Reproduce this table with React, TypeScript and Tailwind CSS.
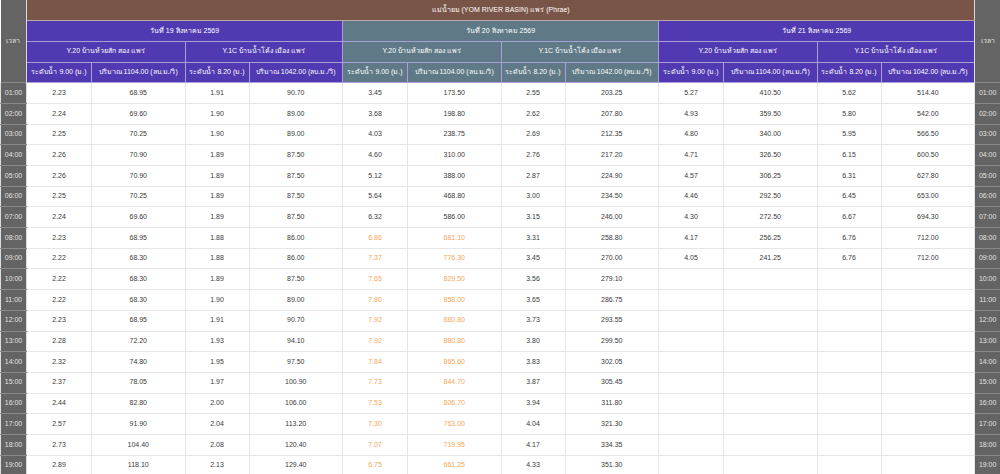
type Station = { level: string[]; flow: string[]; warnFrom?: number };

const hours = Array.from({ length: 19 }, (_, i) => `${String(i + 1).padStart(2, '0')}:00`);

const days: { title: string; tone: 'purple' | 'slate'; stations: Station[] }[] = [
  {
    title: 'วันที่ 19 สิงหาคม 2569',
    tone: 'purple',
    stations: [
      {
        level: ['2.23', '2.24', '2.25', '2.26', '2.26', '2.25', '2.24', '2.23', '2.22', '2.22', '2.22', '2.23', '2.28', '2.32', '2.37', '2.44', '2.57', '2.73', '2.89'],
        flow: ['68.95', '69.60', '70.25', '70.90', '70.90', '70.25', '69.60', '68.95', '68.30', '68.30', '68.30', '68.95', '72.20', '74.80', '78.05', '82.80', '91.90', '104.40', '118.10'],
      },
      {
        level: ['1.91', '1.90', '1.90', '1.89', '1.89', '1.89', '1.89', '1.88', '1.88', '1.89', '1.90', '1.91', '1.93', '1.95', '1.97', '2.00', '2.04', '2.08', '2.13'],
        flow: ['90.70', '89.00', '89.00', '87.50', '87.50', '87.50', '87.50', '86.00', '86.00', '87.50', '89.00', '90.70', '94.10', '97.50', '100.90', '106.00', '113.20', '120.40', '129.40'],
      },
    ],
  },
  {
    title: 'วันที่ 20 สิงหาคม 2569',
    tone: 'slate',
    stations: [
      {
        level: ['3.45', '3.68', '4.03', '4.60', '5.12', '5.64', '6.32', '6.86', '7.37', '7.65', '7.80', '7.92', '7.92', '7.84', '7.73', '7.53', '7.30', '7.07', '6.75'],
        flow: ['173.50', '198.80', '238.75', '310.00', '388.00', '468.80', '586.00', '681.10', '776.30', '829.50', '858.00', '880.80', '880.80', '865.60', '844.70', '806.70', '763.00', '719.95', '661.25'],
        warnFrom: 7,
      },
      {
        level: ['2.55', '2.62', '2.69', '2.76', '2.87', '3.00', '3.15', '3.31', '3.45', '3.56', '3.65', '3.73', '3.80', '3.83', '3.87', '3.94', '4.04', '4.17', '4.33'],
        flow: ['203.25', '207.80', '212.35', '217.20', '224.90', '234.50', '246.00', '258.80', '270.00', '279.10', '286.75', '293.55', '299.50', '302.05', '305.45', '311.80', '321.30', '334.35', '351.30'],
      },
    ],
  },
  {
    title: 'วันที่ 21 สิงหาคม 2569',
    tone: 'purple',
    stations: [
      {
        level: ['5.27', '4.93', '4.80', '4.71', '4.57', '4.46', '4.30', '4.17', '4.05'],
        flow: ['410.50', '359.50', '340.00', '326.50', '306.25', '292.50', '272.50', '256.25', '241.25'],
      },
      {
        level: ['5.62', '5.80', '5.95', '6.15', '6.31', '6.45', '6.67', '6.76', '6.76'],
        flow: ['514.40', '542.00', '566.50', '600.50', '627.80', '653.00', '694.30', '712.00', '712.00'],
      },
    ],
  },
];

const stationNames = ['Y.20 บ้านห้วยสัก สอง แพร่', 'Y.1C บ้านน้ำโค้ง เมือง แพร่'];
const colNames = [
  ['ระดับน้ำ 9.00 (ม.)', 'ปริมาณ 1104.00 (ลบ.ม./วิ)'],
  ['ระดับน้ำ 8.20 (ม.)', 'ปริมาณ 1042.00 (ลบ.ม./วิ)'],
];

const toneBg = (tone: 'purple' | 'slate') => (tone === 'purple' ? 'bg-[#5039b1]' : 'bg-[#5f7a86]');

const hdr = 'border border-[#a99fd8] text-white font-normal h-[20.7px] p-0 text-center';
const timeCell = 'bg-[#646464] text-[#e2e2e2] border-x border-[#dcdcdc] border-y border-y-[#8a8a8a] h-[20.7px] p-0 text-center';

export default function App() {
  return (
    <div className="w-[1000px] h-[474px] overflow-hidden bg-white font-['Liberation_Sans','Noto_Sans',sans-serif] text-[7px]">
      <table className="w-[1000px] table-fixed border-collapse">
        <colgroup>
          <col className="w-[26px]" />
          {days.map((d) => [65, 93.5, 64, 93.5].map((w, i) => <col key={d.title + i} style={{ width: w }} />))}
          <col className="w-[26px]" />
        </colgroup>
        <thead>
          <tr>
            <th rowSpan={4} className="bg-[#646464] text-[#e2e2e2] font-normal border-r border-[#dcdcdc] p-0">
              เวลา
            </th>
            <th colSpan={12} className="bg-[#795548] text-white font-normal h-[20.7px] p-0 border-b border-[#b9a9a2]">
              แม่น้ำยม (YOM RIVER BASIN) แพร่ (Phrae)
            </th>
            <th rowSpan={4} className="bg-[#646464] text-[#e2e2e2] font-normal border-l border-[#dcdcdc] p-0">
              เวลา
            </th>
          </tr>
          <tr>
            {days.map((d) => (
              <th key={d.title} colSpan={4} className={`${hdr} ${toneBg(d.tone)}`}>
                {d.title}
              </th>
            ))}
          </tr>
          <tr>
            {days.map((d) =>
              stationNames.map((s) => (
                <th key={d.title + s} colSpan={2} className={`${hdr} ${toneBg(d.tone)}`}>
                  {s}
                </th>
              )),
            )}
          </tr>
          <tr>
            {days.map((d) =>
              colNames.flat().map((c, i) => (
                <th key={d.title + i} className={`${hdr} ${toneBg(d.tone)} whitespace-nowrap`}>
                  {c}
                </th>
              )),
            )}
          </tr>
        </thead>
        <tbody>
          {hours.map((h, r) => (
            <tr key={h}>
              <td className={timeCell}>{h}</td>
              {days.map((d) =>
                d.stations.map((s, si) => {
                  const warn = s.warnFrom !== undefined && r >= s.warnFrom;
                  const color = warn ? 'text-[#f5a55a]' : 'text-[#3a3a3a]';
                  return [s.level[r], s.flow[r]].map((v, vi) => (
                    <td key={d.title + si + vi} className={`border border-[#e6e6e6] h-[20.7px] p-0 text-center ${color}`}>
                      {v ?? ''}
                    </td>
                  ));
                }),
              )}
              <td className={timeCell}>{h}</td>
            </tr>
          ))}
        </tbody>
      </table>
    </div>
  );
}
